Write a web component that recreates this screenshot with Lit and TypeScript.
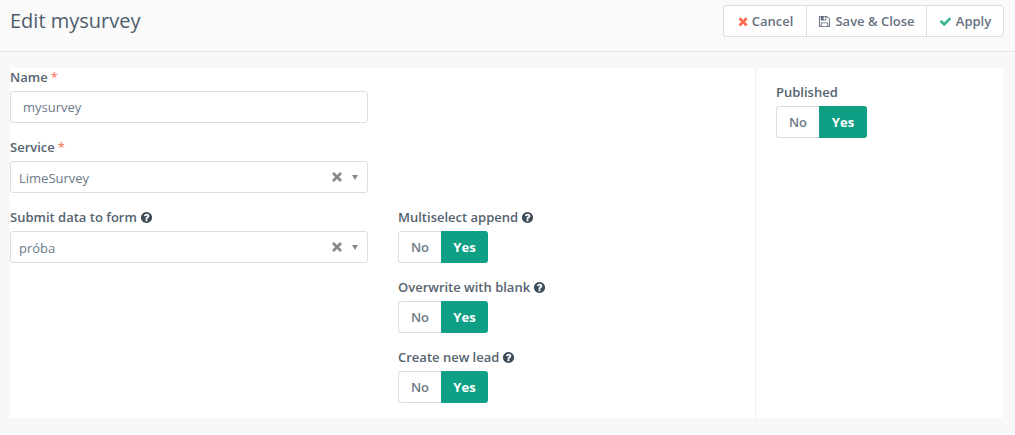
import { LitElement, html, css, svg } from "lit";
import { customElement } from "lit/decorators.js";

const icon = (d: string, cls: string, box = "0 0 1792 1792") =>
  html`<svg class="ic ${cls}" viewBox=${box} aria-hidden="true">${svg`<path d=${d}></path>`}</svg>`;

const TIMES = "M1298 1314q0 40-28 68l-136 136q-28 28-68 28t-68-28l-294-294-294 294q-28 28-68 28t-68-28l-136-136q-28-28-28-68t28-68l294-294-294-294q-28-28-28-68t28-68l136-136q28-28 68-28t68 28l294 294 294-294q28-28 68-28t68 28l136 136q28 28 28 68t-28 68l-294 294 294 294q28 28 28 68z";
const CHECK = "M1671 566q0 40-28 68l-724 724-136 136q-28 28-68 28t-68-28l-136-136-362-362q-28-28-28-68t28-68l136-136q28-28 68-28t68 28l294 295 656-657q28-28 68-28t68 28l136 136q28 28 28 68z";
const SAVE = "M512 1536h768v-384h-768v384zm896 0h128v-896q0-14-10-38.500t-20-34.500l-281-281q-10-10-34-20t-39-10v416q0 40-28 68t-68 28h-576q-40 0-68-28t-28-68v-416h-128v1280h128v-416q0-40 28-68t68-28h832q40 0 68 28t28 68v416zm-384-928v-320q0-13-9.500-22.500t-22.500-9.500h-192q-13 0-22.500 9.500t-9.500 22.500v320q0 13 9.500 22.500t22.500 9.500h192q13 0 22.500-9.500t9.500-22.500zm640 32v928q0 40-28 68t-68 28h-1344q-40 0-68-28t-28-68v-1344q0-40 28-68t68-28h928q40 0 88 20t76 48l280 280q28 28 48 76t20 88z";
const HELP = "M1024 1376v-192q0-14-9-23t-23-9h-192q-14 0-23 9t-9 23v192q0 14 9 23t23 9h192q14 0 23-9t9-23zm256-672q0-88-55.500-163t-138.500-116-170-41q-243 0-371 213-15 24 8 42l132 100q7 6 19 6 16 0 25-12 53-68 86-92 34-24 86-24 48 0 85.500 26t37.500 59q0 38-20 61t-68 45q-63 28-115.500 86.500t-52.500 125.500v36q0 14 9 23t23 9h192q14 0 23-9t9-23q0-19 21.500-49.500t54.500-49.500q32-18 49-28.500t46-35 44.500-48 28-60.500 12.500-81zm384 192q0 209-103 385.500t-279.500 279.500-385.500 103-385.500-103-279.500-279.500-103-385.500 103-385.500 279.500-279.500 385.500-103 385.500 103 279.500 279.500 103 385.500z";

@customElement("app-root")
export class AppRoot extends LitElement {
  static styles = css`
    :host {
      display: block;
      height: 435px;
      overflow: hidden;
      background: #f8f8f8;
      font-family: "Open Sans", sans-serif;
      font-size: 13px;
      color: #4e5d6c;
    }
    * { box-sizing: border-box; }
    .header {
      height: 52px;
      padding: 5px 11px 0 10px;
      display: flex;
      justify-content: space-between;
      align-items: flex-start;
      background: #fafafa;
      border-bottom: 1px solid #e7e7e7;
    }
    h1 {
      margin: 0;
      font-size: 20px;
      line-height: 32px;
      font-weight: 400;
      color: #4e5d6c;
    }
    .actions {
      display: flex;
      height: 32px;
      background: #fff;
      border: 1px solid #ddd;
      border-radius: 3px;
    }
    .action {
      display: flex;
      align-items: center;
      justify-content: center;
      gap: 4px;
      font-weight: 600;
      font-size: 13px;
      color: #66727f;
      border-left: 1px solid #ddd;
    }
    .action:first-child { border-left: 0; }
    .a1 { width: 82px; padding-left: 1px; }
    .a2 { width: 120px; }
    .a3 { width: 77px; }
    .ic { display: block; width: 13px; height: 13px; flex: none; }
    .ic path { fill: currentColor; }
    .red { color: #f86b4f; width: 10.2px; }
    .slate { color: #5d6c7c; }
    .green { color: #35b492; }
    .help { color: #3f4c5a; margin-left: 3px; }
    .panel {
      margin: 16px 12px 0 10px;
      height: 350px;
      background: #fff;
      display: grid;
      grid-template-columns: 746px 1fr;
    }
    .main {
      border-right: 1px solid #ebedf0;
      display: grid;
      grid-template-columns: 358px 1fr;
      column-gap: 30px;
      grid-auto-rows: 70px;
    }
    .side { padding: 15px 0 0 20px; }
    label {
      display: flex;
      align-items: center;
      height: 23px;
      padding-bottom: 5px;
      font-weight: 600;
      font-size: 13px;
      line-height: 18px;
      color: #55636f;
    }
    .req { color: #f86b4f; margin-left: 3px; font-weight: 400; }
    .input, .select {
      height: 32px;
      background: #fff;
      border: 1px solid #ddd;
      border-radius: 3px;
      display: flex;
      align-items: center;
      font-size: 13px;
      color: #6d7a88;
    }
    .input { padding-left: 12px; }
    .select { padding-left: 8px; }
    .grow { flex: 1; padding-top: 2px; }
    .clear { width: 10px; height: 10px; color: #888; margin-right: 10px; display: block; }
    .clear line { stroke: currentColor; stroke-width: 2.6; }
    .caret {
      width: 0; height: 0;
      border-left: 3.5px solid transparent;
      border-right: 3.5px solid transparent;
      border-top: 5px solid #888;
      margin-right: 9px;
    }
    .col2 { grid-column: 2; }
    .col1 { grid-column: 1; }
    .toggle {
      display: inline-flex;
      height: 32px;
      vertical-align: top;
    }
    .no, .yes {
      display: flex;
      align-items: center;
      justify-content: center;
      font-size: 13px;
      font-weight: 600;
    }
    .no {
      width: 43px;
      color: #6d7a88;
      background: #fff;
      border: 1px solid #ddd;
      border-right: 0;
      border-radius: 3px 0 0 3px;
    }
    .yes {
      width: 47px;
      color: #fff;
      font-weight: 700;
      background: #0e9f85;
      border-radius: 0 3px 3px 0;
    }
    .side .yes { width: 48px; }
    .strip { height: 2px; margin-top: 15px; background: #fff; }
  `;

  private toggle() {
    return html`<div class="toggle"><span class="no">No</span><span class="yes">Yes</span></div>`;
  }

  private select(value: string) {
    return html`<div class="select">
      <span class="grow">${value}</span>
      <svg class="clear" viewBox="0 0 10 10" aria-hidden="true"><line x1="1" y1="1" x2="9" y2="9"></line><line x1="9" y1="1" x2="1" y2="9"></line></svg>
      <span class="caret"></span>
    </div>`;
  }

  render() {
    return html`
      <div class="header">
        <h1>Edit mysurvey</h1>
        <div class="actions">
          <div class="action a1">${icon(TIMES, "red", "0 0 1408 1792")}Cancel</div>
          <div class="action a2">${icon(SAVE, "slate")}Save &amp; Close</div>
          <div class="action a3">${icon(CHECK, "green")}Apply</div>
        </div>
      </div>
      <div class="panel">
        <div class="main">
          <div class="col1">
            <label>Name<span class="req">*</span></label>
            <div class="input">mysurvey</div>
          </div>
          <div class="col1">
            <label>Service<span class="req">*</span></label>
            ${this.select("LimeSurvey")}
          </div>
          <div class="col1">
            <label>Submit data to form${icon(HELP, "help")}</label>
            ${this.select("próba")}
          </div>
          <div class="col2">
            <label>Multiselect append${icon(HELP, "help")}</label>
            ${this.toggle()}
          </div>
          <div class="col2">
            <label>Overwrite with blank${icon(HELP, "help")}</label>
            ${this.toggle()}
          </div>
          <div class="col2">
            <label>Create new lead${icon(HELP, "help")}</label>
            ${this.toggle()}
          </div>
        </div>
        <div class="side">
          <label>Published</label>
          ${this.toggle()}
        </div>
      </div>
      <div class="strip"></div>
    `;
  }
}
